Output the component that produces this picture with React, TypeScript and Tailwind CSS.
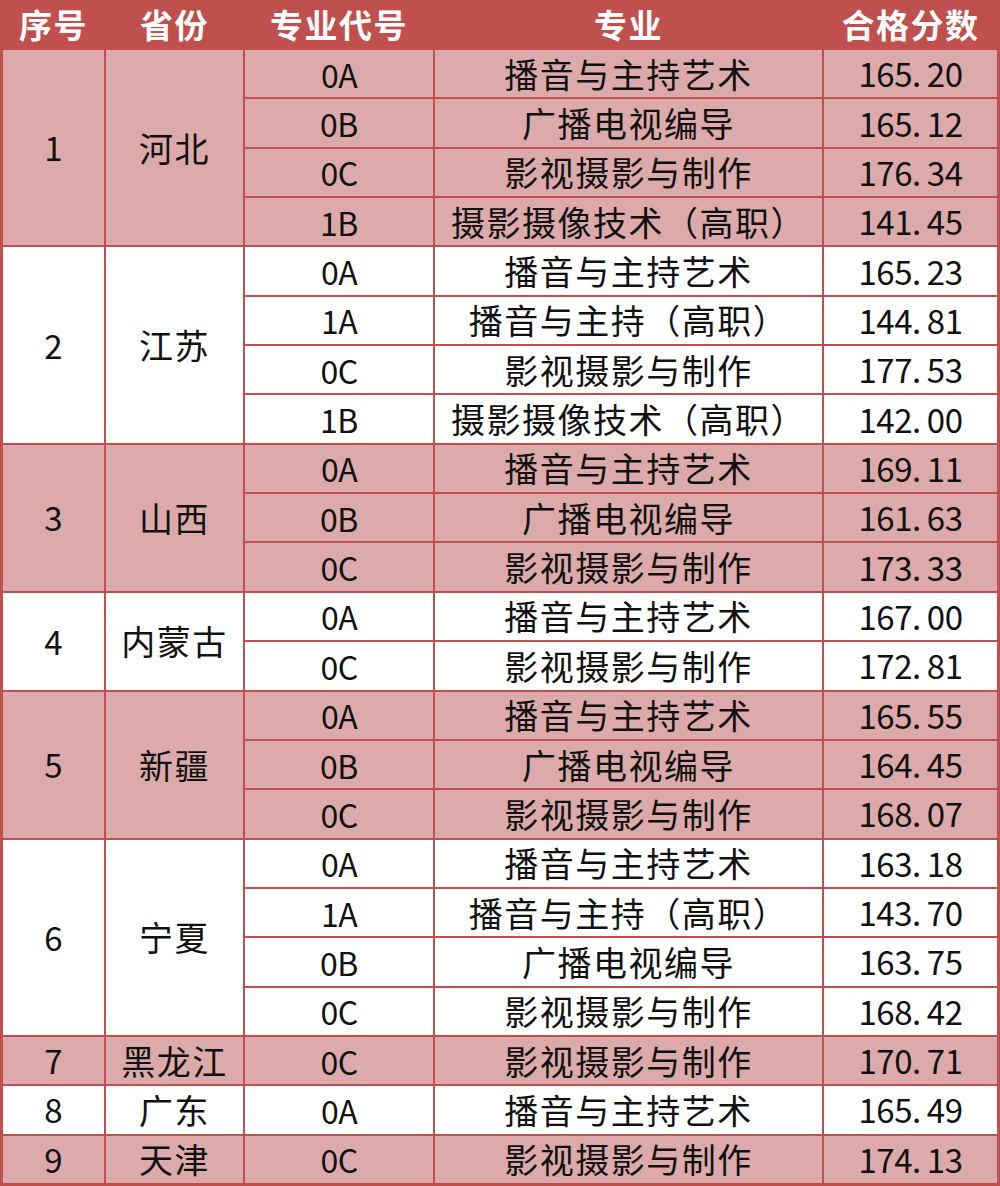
import React from 'react';

type Group = {
  seq: number;
  province: string;
  items: [string, string, string][];
};

const groups: Group[] = [
  {
    seq: 1,
    province: '河北',
    items: [
      ['0A', '播音与主持艺术', '165.20'],
      ['0B', '广播电视编导', '165.12'],
      ['0C', '影视摄影与制作', '176.34'],
      ['1B', '摄影摄像技术（高职）', '141.45'],
    ],
  },
  {
    seq: 2,
    province: '江苏',
    items: [
      ['0A', '播音与主持艺术', '165.23'],
      ['1A', '播音与主持（高职）', '144.81'],
      ['0C', '影视摄影与制作', '177.53'],
      ['1B', '摄影摄像技术（高职）', '142.00'],
    ],
  },
  {
    seq: 3,
    province: '山西',
    items: [
      ['0A', '播音与主持艺术', '169.11'],
      ['0B', '广播电视编导', '161.63'],
      ['0C', '影视摄影与制作', '173.33'],
    ],
  },
  {
    seq: 4,
    province: '内蒙古',
    items: [
      ['0A', '播音与主持艺术', '167.00'],
      ['0C', '影视摄影与制作', '172.81'],
    ],
  },
  {
    seq: 5,
    province: '新疆',
    items: [
      ['0A', '播音与主持艺术', '165.55'],
      ['0B', '广播电视编导', '164.45'],
      ['0C', '影视摄影与制作', '168.07'],
    ],
  },
  {
    seq: 6,
    province: '宁夏',
    items: [
      ['0A', '播音与主持艺术', '163.18'],
      ['1A', '播音与主持（高职）', '143.70'],
      ['0B', '广播电视编导', '163.75'],
      ['0C', '影视摄影与制作', '168.42'],
    ],
  },
  { seq: 7, province: '黑龙江', items: [['0C', '影视摄影与制作', '170.71']] },
  { seq: 8, province: '广东', items: [['0A', '播音与主持艺术', '165.49']] },
  { seq: 9, province: '天津', items: [['0C', '影视摄影与制作', '174.13']] },
];

const spans: Record<number, string> = {
  1: 'row-span-1',
  2: 'row-span-2',
  3: 'row-span-3',
  4: 'row-span-4',
};

const headers = ['序号', '省份', '专业代号', '专业', '合格分数'];

// half-width dot, like the original sheet font
const Score = ({ value }: { value: string }) => {
  const [a, b] = value.split('.');
  return (
    <span className="tracking-[-0.5px]">
      {a}
      <span className="inline-block w-[0.45em] text-left">.</span>
      {b}
    </span>
  );
};

export default function App() {
  return (
    <div
      className="w-[1000px] h-[1186px] bg-[#c0504d] px-[3px] pb-[3px] grid grid-cols-[101px_137px_188px_387px_173px] grid-rows-[48px_repeat(23,1fr)] gap-[2px] text-[#111]"
      style={{ fontFamily: '"Noto Sans CJK SC", "Noto Sans", sans-serif' }}
    >
      {headers.map((h) => (
        <div
          key={h}
          className="flex items-center justify-center text-white font-bold text-[33px] tracking-[1.5px] leading-none"
        >
          {h}
        </div>
      ))}
      {groups.map((g, gi) => {
        const bg = gi % 2 === 0 ? 'bg-[#dcaaaa]' : 'bg-white';
        const span = spans[g.items.length];
        return (
          <React.Fragment key={g.seq}>
            <div className={`${span} ${bg} flex items-center justify-center text-[33px] leading-none`}>
              {g.seq}
            </div>
            <div className={`${span} ${bg} flex items-center justify-center text-[34px] tracking-[1.5px] leading-none`}>
              {g.province}
            </div>
            {g.items.map(([code, major, score]) => (
              <React.Fragment key={code + major}>
                <div className={`${bg} flex items-center justify-center text-[32px] tracking-[-0.5px] leading-none`}>
                  {code}
                </div>
                <div className={`${bg} flex items-center justify-center text-[34px] tracking-[1.5px] leading-none`}>
                  {major}
                </div>
                <div className={`${bg} flex items-center justify-center text-[33px] leading-none`}>
                  <Score value={score} />
                </div>
              </React.Fragment>
            ))}
          </React.Fragment>
        );
      })}
    </div>
  );
}
